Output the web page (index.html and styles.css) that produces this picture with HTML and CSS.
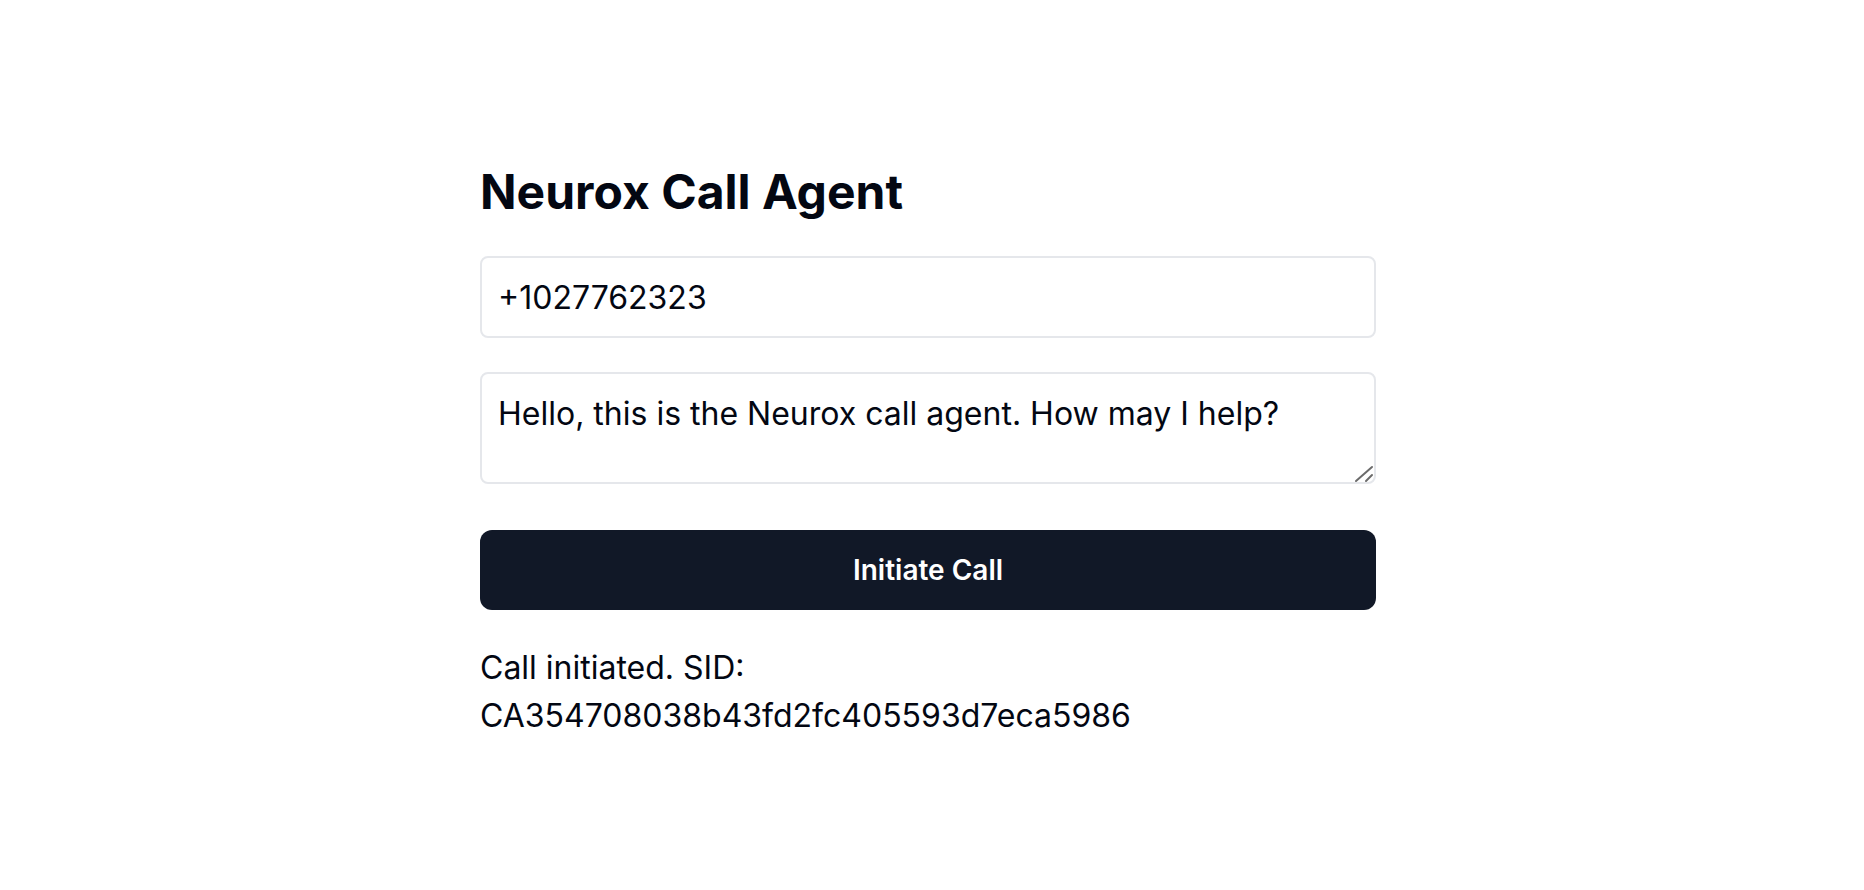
FILE: index.html
```html
<!DOCTYPE html>
<html lang="en">
<head>
<meta charset="utf-8">
<title>Neurox Call Agent</title>
<link rel="stylesheet" href="styles.css">
</head>
<body>
<main class="page">
  <section class="card">
    <h1 class="title">Neurox Call Agent</h1>
    <input class="field" type="text" value="+1027762323">
    <div class="area-wrap">
      <textarea class="field area">Hello, this is the Neurox call agent. How may I help?</textarea>
      <svg class="grip" width="24" height="24" viewBox="0 0 24 24" aria-hidden="true">
        <line x1="4" y1="21" x2="20" y2="7" stroke="#6b6b6b" stroke-width="2" stroke-linecap="round"/>
        <line x1="14" y1="21" x2="20" y2="15" stroke="#6b6b6b" stroke-width="2" stroke-linecap="round"/>
      </svg>
    </div>
    <button class="btn" type="button">Initiate Call</button>
    <p class="status">Call initiated. SID:<br>CA354708038b43fd2fc405593d7eca5986</p>
  </section>
</main>
</body>
</html>
```

FILE: styles.css
```css
* { box-sizing: border-box; }
html, body { margin: 0; padding: 0; background: #ffffff; }
body {
  font-family: Inter, "Noto Sans", "Liberation Sans", sans-serif;
  color: #030712;
  padding-right: 8px;
}
.page {
  padding-top: 160px;
}
.card {
  width: 896px;
  margin: 0 auto;
  display: flex;
  flex-direction: column;
}
.title {
  margin: 0 0 32px 0;
  font-size: 48px;
  line-height: 64px;
  font-weight: 700;
  color: #030712;
}
.field {
  display: block;
  width: 100%;
  margin: 0;
  font-family: inherit;
  font-size: 32px;
  line-height: 48px;
  color: #030712;
  background: #ffffff;
  border: 2px solid #e5e7eb;
  border-radius: 8px;
  padding: 0 16px;
  height: 82px;
  outline: none;
}
.area-wrap {
  position: relative;
  margin-top: 34px;
}
.area {
  height: 112px;
  padding: 16px;
  resize: none;
}
.grip {
  position: absolute;
  right: 0;
  bottom: 0;
  pointer-events: none;
}
.btn {
  margin-top: 46px;
  height: 80px;
  width: 100%;
  border: none;
  border-radius: 12px;
  background: #111827;
  color: #ffffff;
  font-family: inherit;
  font-size: 28px;
  line-height: 40px;
  font-weight: 600;
  cursor: pointer;
}
.status {
  margin: 34px 0 0 0;
  font-size: 32px;
  line-height: 48px;
  color: #030712;
}
```
